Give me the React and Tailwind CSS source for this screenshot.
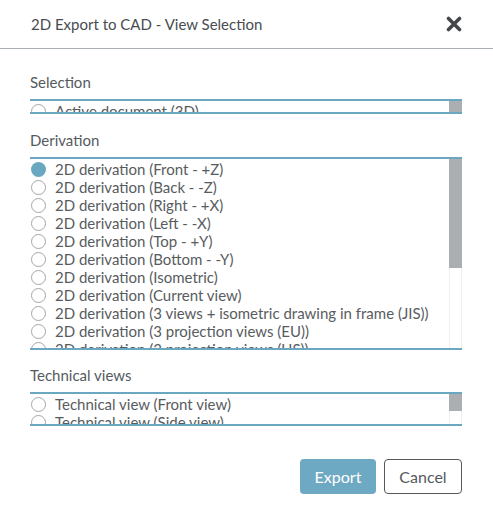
import React from 'react';

const derivations = [
  '2D derivation (Front - +Z)',
  '2D derivation (Back - -Z)',
  '2D derivation (Right - +X)',
  '2D derivation (Left - -X)',
  '2D derivation (Top - +Y)',
  '2D derivation (Bottom - -Y)',
  '2D derivation (Isometric)',
  '2D derivation (Current view)',
  '2D derivation (3 views + isometric drawing in frame (JIS))',
  '2D derivation (3 projection views (EU))',
  '2D derivation (3 projection views (US))',
];

const technical = [
  'Technical view (Front view)',
  'Technical view (Side view)',
];

const Radio = ({ label, checked }) => (
  <div className="flex items-center h-[18px] pl-[1px] whitespace-nowrap">
    {checked ? (
      <span className="shrink-0 w-[15px] h-[15px] rounded-full bg-[#6aa7c1]" />
    ) : (
      <span className="shrink-0 w-[15px] h-[15px] rounded-full border-[1.5px] border-[#a3a6a8] bg-white" />
    )}
    <span className="ml-[9px] text-[15px] leading-[18px] text-[#585c60]">{label}</span>
  </div>
);

const ListBox = ({ items, checkedIndex = -1, height, thumb }) => (
  <div className={`flex border-y-2 border-[#6aa7c1] ${height}`}>
    <div className="flex-1 min-w-0 overflow-hidden pt-[1px]">
      {items.map((it, i) => (
        <Radio key={it} label={it} checked={i === checkedIndex} />
      ))}
    </div>
    {/* fake scrollbar */}
    <div className="w-[13px] shrink-0 flex flex-col border-x border-[#efefef] bg-white">
      <div className={`bg-[#abafb2] -mx-px ${thumb}`} />
    </div>
  </div>
);

const Section = ({ label, className, children }) => (
  <div className={className}>
    <div className="text-[15px] leading-[20px] text-[#555a5e] mb-[7px]">{label}</div>
    {children}
  </div>
);

export default function App() {
  return (
    <div className="w-[493px] h-[513px] bg-white font-['Lato',sans-serif]">
      {/* Header */}
      <div className="h-[49px] flex items-center justify-between pl-[31px] pr-[31px] border-b border-[#a9afb4]">
        <span className="text-[15px] text-[#484c50]">2D Export to CAD - View Selection</span>
        <svg width="16" height="16" viewBox="0 0 16 16" className="-mt-px">
          <path d="M2.5 2.5 L13.5 13.5 M13.5 2.5 L2.5 13.5" stroke="#45484b" strokeWidth="3.6" strokeLinecap="round" />
        </svg>
      </div>

      <div className="pl-[30px] pr-[31px] pt-[23px]">
        <Section label="Selection">
          <ListBox items={['Active document (3D)']} height="h-[15px]" thumb="h-full" />
        </Section>

        <Section label="Derivation" className="mt-[16px]">
          <ListBox items={derivations} checkedIndex={0} height="h-[193px]" thumb="h-[109px]" />
        </Section>

        <Section label="Technical views" className="mt-[15px]">
          <ListBox items={technical} height="h-[34px]" thumb="h-[17px]" />
        </Section>

        <div className="flex justify-end gap-[8px] mt-[33px]">
          <button className="w-[76px] h-[35px] rounded-[4px] bg-[#6ea9c3] text-white text-[16px]">Export</button>
          <button className="w-[78px] h-[35px] rounded-[4px] border border-[#55595c] bg-white text-[#55595c] text-[16px]">Cancel</button>
        </div>
      </div>
    </div>
  );
}
